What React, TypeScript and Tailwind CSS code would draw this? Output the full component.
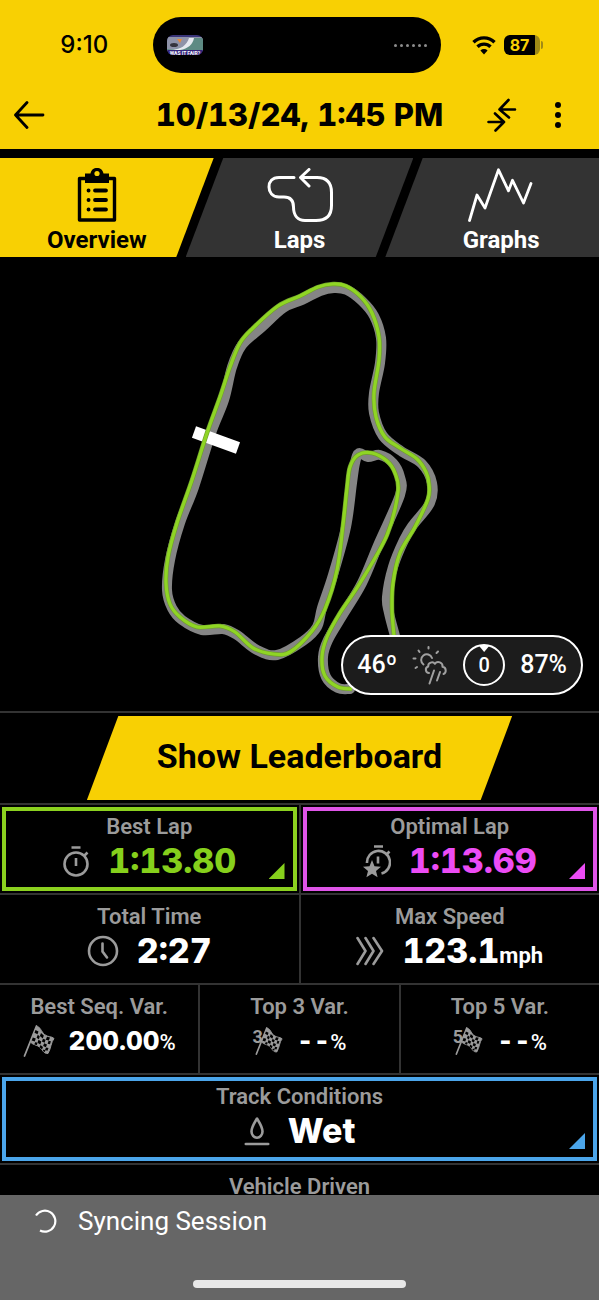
import type { ReactNode } from 'react';
import clsx from 'clsx';

type Point = [number, number];

// Track surface and driven line, in map units
const SURFACE: Point[] = [
  [395, 636], [389, 613], [387, 597], [393, 567], [404, 540], [413, 525], [430, 503], [432, 483],
  [422, 464], [401, 451], [383, 436], [374, 413], [374, 393], [380, 363], [381, 338], [374, 316],
  [362, 301], [347, 290], [334, 288], [320, 291], [302, 300], [283, 308], [262, 327], [242, 345],
  [232, 367], [224, 400], [211, 433], [194, 487], [180, 523], [170, 560], [167, 590], [172, 608],
  [182, 620], [202, 630], [223, 629], [237, 635], [257, 650], [277, 655], [303, 641], [317, 627],
  [322, 608], [333, 575], [346, 527], [352, 483], [355, 463], [359, 453], [368, 457], [380, 455],
  [393, 463], [400, 477], [400, 495], [379, 543], [362, 583], [344, 613], [328, 640], [323, 657],
  [326, 677], [338, 688], [350, 689],
];

const LINE: Point[] = [
  [394, 636], [392, 610], [393, 583], [400, 553], [415, 527], [428, 499], [429, 484], [426, 472],
  [417, 459], [400, 448], [385, 437], [376, 417], [374, 393], [379, 360], [379, 337], [372, 313],
  [361, 297], [346, 286], [333, 284], [318, 287], [300, 296], [278, 306], [253, 328], [240, 343],
  [230, 367], [220, 397], [207, 433], [192, 480], [177, 523], [168, 557], [166, 583], [170, 604],
  [180, 617], [197, 627], [220, 626], [235, 632], [253, 648], [273, 654], [290, 652], [312, 631],
  [325, 609], [337, 570], [343, 525], [347, 488], [350, 467], [358, 455], [372, 453], [387, 461],
  [395, 473], [398, 492], [387, 535], [360, 583], [340, 613], [327, 637], [322, 657], [325, 676],
  [338, 687], [352, 689],
];

function smoothPath(points: Point[]) {
  let d = `M${points[0][0]} ${points[0][1]}`;
  for (let i = 0; i < points.length - 1; i++) {
    const p0 = points[Math.max(i - 1, 0)];
    const p1 = points[i];
    const p2 = points[i + 1];
    const p3 = points[Math.min(i + 2, points.length - 1)];
    d += `C${p1[0] + (p2[0] - p0[0]) / 6} ${p1[1] + (p2[1] - p0[1]) / 6} ${p2[0] - (p3[0] - p1[0]) / 6} ${p2[1] - (p3[1] - p1[1]) / 6} ${p2[0]} ${p2[1]}`;
  }
  return d;
}

function TrackMap() {
  return (
    <svg viewBox="0 257 599 454" className="block w-full" fill="none" role="img" aria-label="Track map">
      <path d={smoothPath(SURFACE)} stroke="#858585" strokeWidth="10" strokeLinejoin="round" strokeLinecap="round" />
      <path d="M194 432 238 448" stroke="#fff" strokeWidth="12" />
      <path d={smoothPath(LINE)} stroke="#6f9f2c" strokeWidth="4.5" strokeLinejoin="round" />
      <path d={smoothPath(LINE)} stroke="#8fd524" strokeWidth="3.2" strokeLinejoin="round" />
    </svg>
  );
}

function StopwatchIcon() {
  return (
    <svg viewBox="0 0 28 32" className="h-8 w-7" fill="none" stroke="currentColor" strokeWidth="2.6">
      <circle cx="14" cy="19" r="11.5" />
      <path d="M9.5 2.5h9M14 13v8M22.5 10.5l3-3" />
    </svg>
  );
}

function OptimalIcon() {
  return (
    <svg viewBox="0 0 28 34" className="h-[34px] w-7" fill="none" stroke="currentColor" strokeWidth="2.6">
      <path d="M4 19a11.5 11.5 0 1 1 14.5 10.5" />
      <path d="M11 2.5h9M15 12.5v7M23.5 10.5l3-3" />
      <path
        d="m9 16 2.5 6.2 6.5.5-5 4.200 1.600 6.400L9 29.800l-5.600 3.500L5 26.900 0 22.700l6.500-.5Z"
        fill="currentColor"
        stroke="none"
      />
    </svg>
  );
}

function ClockIcon() {
  return (
    <svg viewBox="0 0 32 32" className="size-8" fill="none" stroke="currentColor" strokeWidth="2.6" strokeLinecap="round">
      <circle cx="16" cy="16" r="14" />
      <path d="M15.5 8.500v8l4.500 6" />
    </svg>
  );
}

function SpeedIcon() {
  return (
    <svg viewBox="0 0 28 30" className="h-[30px] w-7" fill="none" stroke="currentColor" strokeWidth="2.6" strokeLinecap="round" strokeLinejoin="round">
      <path d="m1.500 2 8 13-8 13M9.500 2l8 13-8 13M17.500 2l8.500 13-8.500 13" />
    </svg>
  );
}

function FlagIcon({ count }: { count?: number }) {
  return (
    <span className="flex items-start">
      {count && <span className="-mr-2 text-lg leading-5 font-bold">{count}</span>}
      <svg viewBox="0 0 32 32" className={count ? 'size-7' : 'size-8'} fill="none" stroke="currentColor">
        <path d="M13.500 1 1.500 31" strokeWidth="1.800" strokeLinecap="round" />
        <path
          d="M13.500 1.500c4 0 4.500 5 8 8s7 1.500 9.500 4c-3 3.500-3 10-6 15-4.500.5-5.500-4-8.500-6.500s-6.500-2-8.500-4.500Z"
          fill="currentColor"
        />
        {/* dark checks */}
        <g fill="#000" stroke="none">
          <path d="m12.500 5 3 1.500-1 2.800-3-1.500ZM18 8l2.800 2.600-1 2.900-2.900-2.400ZM24 11.800l3 .6-1.200 3-3-.7ZM14.800 9.800l2 1.600-1 2.800-2.200-1.500ZM20 13.800l2.600 1-1 3-2.700-1.400ZM25.600 15.800l2.300.4-.9 3-2.400-.4ZM9.800 12.600l3 .9-1.100 3-3-.9ZM15.500 14.800l2.900 1.800-1.100 2.900-2.800-1.800ZM21.200 18.200l2.800 1.200-1.100 2.900-2.800-1.200ZM12.500 17l2 1-.8 2.200-2.400-1ZM17.500 20l2.500 1.900-1 2.600-2.400-2.200ZM23 22.500l2.500.5-1 2.800-2.500-.8ZM20.500 24.500l2 .8-.7 1.800-1.900-1Z" />
        </g>
      </svg>
    </span>
  );
}

function WetIcon() {
  return (
    <svg viewBox="0 0 26 30" className="h-[30px] w-[26px]" fill="none" stroke="currentColor" strokeWidth="2.600" strokeLinecap="round" strokeLinejoin="round">
      <path d="M13 2.500c-3 5-5.500 8.500-5.500 13a5.500 6.200 0 0 0 11 0c0-4.500-2.500-8-5.500-13Z" />
      <path d="M1.800 28h22.400" />
    </svg>
  );
}

function WeatherIcon() {
  return (
    <svg viewBox="0 0 36 40" className="h-10 w-9 text-[#a0a0a0]" fill="none" stroke="currentColor" strokeWidth="2" strokeLinecap="round" strokeLinejoin="round">
      <path d="M11.500 19.500a5.600 5.600 0 1 1 8.500-6.500M16.500 2v1.500M6.500 5.500l1 1.500M26 6.500l-1.500 1.500M1.500 13.500h2M3.500 23l1.500-1" />
      <path d="M17 28c-3.500 0-4.500-5.500-.8-6.500-.4-4 4.800-5.500 6.600-2.700 2.700-3.600 8.400-1.300 7.700 3 4 .5 4.200 6.200 1 7.200" />
      <path d="m22 25.500-4.500 13M28 27l-3 8.500" />
    </svg>
  );
}

function StatusBar() {
  return (
    <div className="grid grid-cols-[1fr_288px_1fr] items-center pt-[17px] pr-1.5">
      <span className="pl-4 text-center font-['Inter',sans-serif] text-2xl font-medium">9:10</span>
      <div className="flex h-14 items-center justify-between rounded-full bg-black px-3.5">
        <div className="flex h-5 w-9 items-end justify-center overflow-hidden rounded-md bg-[#3a3579]">
          <svg viewBox="0 0 36 20" className="size-full">
            <path d="M0 2h36v14H0z" fill="#8f93a8" />
            <path d="M0 14C14 16 20 9 26 3h10v12H0z" fill="#5d8a83" />
            <path d="M2 15C14 15 20 10 22 3h5c-1 6-6 11-14 12z" fill="#e6e9ef" />
            <path d="M10 4h5l-2 4z" fill="#e78a3c" />
            <ellipse cx="7" cy="10" rx="4" ry="2" fill="#34343c" />
            <path d="M0 15h36v5H0z" fill="#34257a" />
            <text x="18" y="19.500" textAnchor="middle" fontSize="5" fontWeight="700" fill="#fff" fontFamily="Roboto, sans-serif">
              WAS IT FAIR?
            </text>
          </svg>
        </div>
        <div className="flex gap-[3px]">
          {[0, 1, 2, 3, 4, 5].map((dot) => (
            <span key={dot} className="size-[3px] rounded-full bg-[#8c8c8c]" />
          ))}
        </div>
      </div>
      <div className="flex items-center gap-2 pl-[31px]">
        <svg viewBox="0 0 24 20" className="h-5 w-6" fill="none" stroke="currentColor" strokeWidth="3.400">
          <path d="M1.500 7.200a15 15 0 0 1 21 0M5.500 11.800a9.300 9.300 0 0 1 13 0" />
          <path d="m12 19.500-3.600-4a5.200 5.200 0 0 1 7.200 0Z" fill="currentColor" stroke="none" />
        </svg>
        <div className="flex items-center gap-px">
          <span className="flex h-5 w-9 items-center justify-center rounded-md bg-gradient-to-r from-black from-87% to-[#a08a16] to-87% pr-1 font-['Inter',sans-serif] text-base font-bold text-[#f8d003]">
            87
          </span>
          <span className="h-2 w-0.5 rounded-r bg-[#a08a16]" />
        </div>
      </div>
    </div>
  );
}

function Header() {
  return (
    <header className="shrink-0 bg-[#f8d003] text-black">
      <StatusBar />
      <div className="grid h-[76px] grid-cols-[1fr_auto_1fr] items-center pt-2">
        <button type="button" aria-label="Back" className="ml-3.5 w-8">
          <svg viewBox="0 0 32 28" className="h-7 w-8" fill="none" stroke="currentColor" strokeWidth="2.800" strokeLinecap="round" strokeLinejoin="round">
            <path d="M29 14H1.500M13 1.500 1.500 14 13 26.500" />
          </svg>
        </button>
        <h1 className="font-['Inter',sans-serif] text-[31px] leading-10 font-extrabold tabular-nums">10/13/24, 1:45 PM</h1>
        <div className="flex items-center justify-end gap-8 pr-8">
          <button type="button" aria-label="Compare sessions">
            <svg viewBox="0 0 30 34" className="h-[34px] w-[30px]" fill="none" stroke="currentColor" strokeWidth="2.600" strokeLinecap="round" strokeLinejoin="round">
              <path d="M28 11.500H12.500M21.500 2l-9 9.500 9.500 8M1.500 24H17M8 15.500l9 8.500-8.500 8.500" />
            </svg>
          </button>
          <button type="button" aria-label="More options" className="px-1.5">
            <svg viewBox="0 0 6 26" className="h-[26px] w-1.5" fill="currentColor">
              <circle cx="3" cy="3" r="3" />
              <circle cx="3" cy="13" r="3" />
              <circle cx="3" cy="23" r="3" />
            </svg>
          </button>
        </div>
      </div>
    </header>
  );
}

function Tabs() {
  return (
    <nav className="mt-[9px] flex h-[99px] shrink-0 text-2xl leading-6 font-bold text-white">
      <button
        type="button"
        aria-current="page"
        className="min-w-0 grow-[214] basis-0 bg-[#f8d003] text-black [clip-path:polygon(0_0,100%_0,82.5%_100%,0_100%)]"
      >
        <span className="flex h-full flex-col items-center gap-1 pt-2.5 pr-5">
          <svg viewBox="0 0 40 56" className="h-14 w-10" fill="none" stroke="currentColor" strokeWidth="3.400" strokeLinecap="round">
            <path d="M2.500 10.500h35v41.500h-35z" strokeLinejoin="round" />
            <path d="M8 5.500h5.500C14.500 1.500 16.500 0 20 0s5.500 1.500 6.500 5.500H32V15H8Z" fill="currentColor" stroke="none" />
            <circle cx="20" cy="5.500" r="2.600" fill="#f8d003" stroke="none" />
            <path d="M11.500 22.500h.1M11.500 32h.1M11.500 41.500h.1M18 22.500h11M18 32h11M18 41.500h11" strokeWidth="3.800" />
          </svg>
          Overview
        </span>
      </button>
      <button
        type="button"
        className="-ml-7 min-w-0 grow-[228] basis-0 bg-[#333] [clip-path:polygon(16.5%_0,100%_0,83.5%_100%,0_100%)]"
      >
        <span className="flex h-full flex-col items-center gap-1 pt-2.5">
          <svg viewBox="0 0 66 56" className="h-14 w-[66px]" fill="none" stroke="currentColor" strokeWidth="3" strokeLinecap="round" strokeLinejoin="round">
            <path d="M27 9.500H12C5 9.500 2 14 2 19S5 29 12 29h5c7 0 9.500 4 9.500 10C26.500 47.500 31 52.500 38 52.500h11c10 0 15.500-5 15.500-15v-13C64.500 14.500 60 9.500 50 9.500H34M42 1.500 33.500 9.500 42 18" />
          </svg>
          Laps
        </span>
      </button>
      <button
        type="button"
        className="-ml-7 min-w-0 grow-[214] basis-0 bg-[#333] [clip-path:polygon(17.5%_0,100%_0,100%_100%,0_100%)]"
      >
        <span className="flex h-full flex-col items-center gap-1 pt-2.5 pl-[18px]">
          <svg viewBox="0 0 70 56" className="h-14 w-[70px]" fill="none" stroke="currentColor" strokeWidth="2.800" strokeLinecap="round" strokeLinejoin="round">
            <path d="M3.500 52.500 11 27l8 13L32.500 1.800l10 21 4-10.500L57.500 35 65 15.500" />
          </svg>
          Graphs
        </span>
      </button>
    </nav>
  );
}

type Accent = 'green' | 'pink' | 'blue';

interface CellProps {
  label: string;
  icon: ReactNode;
  value: string;
  unit?: string;
  small?: boolean;
  // set on cells that open a detail page
  accent?: Accent;
}

const frameColor: Record<Accent, string> = {
  green: 'border-[#8bd11f]',
  pink: 'border-[#df55e8]',
  blue: 'border-[#4ba5ea]',
};

const cornerColor: Record<Accent, string> = {
  green: 'bg-[#86d01c]',
  pink: 'bg-[#ec4cf5]',
  blue: 'bg-[#4ba5ea]',
};

const valueColor: Record<Accent, string> = {
  green: 'text-[#86d01c]',
  pink: 'text-[#ec4cf5]',
  blue: 'text-white',
};

function Cell({ label, icon, value, unit, small, accent }: CellProps) {
  const body = (
    <>
      <span className="text-[22px] leading-6 font-semibold text-[#9b9b9b]">{label}</span>
      <span className={clsx('flex h-11 items-center justify-center text-[#9b9b9b]', small ? 'gap-3.5' : 'gap-[18px]')}>
        {icon}
        <span className={clsx('flex items-baseline', accent ? valueColor[accent] : 'text-white')}>
          <span
            className={clsx(
              "font-['Inter',sans-serif] leading-10 font-extrabold tabular-nums",
              small ? 'text-[26px]' : 'text-[34px]'
            )}
          >
            {value}
          </span>
          {unit && (
            <span className={clsx('text-[22px] leading-6', unit === '%' ? 'font-medium' : 'font-bold')}>{unit}</span>
          )}
        </span>
      </span>
    </>
  );

  if (!accent) {
    return <div className="flex h-[88px] min-w-0 flex-1 flex-col items-center pt-2.5">{body}</div>;
  }

  return (
    <div className="h-[88px] min-w-0 flex-1 p-0.5">
      <button
        type="button"
        className={clsx('relative flex h-full w-full flex-col items-center border-4 pt-1', frameColor[accent])}
      >
        {body}
        <span
          className={clsx(
            'absolute right-2 bottom-2 size-4 [clip-path:polygon(100%_0,100%_100%,0_100%)]',
            cornerColor[accent]
          )}
        />
      </button>
    </div>
  );
}

function Row({ children }: { children: ReactNode }) {
  return <div className="flex divide-x-2 divide-[#333] border-t-2 border-[#333]">{children}</div>;
}

export default function App() {
  return (
    <div className="flex h-screen flex-col overflow-hidden bg-black font-['Roboto',sans-serif] text-white">
      <Header />
      <Tabs />

      <main className="min-h-0 flex-1 overflow-y-auto [scrollbar-width:none]">
        <div className="relative">
          <TrackMap />
          <div className="absolute right-4 bottom-4 flex h-[60px] items-center gap-[15px] rounded-full border-2 border-white bg-[#1c1c1c] px-3.5 text-[25px] font-medium">
            <span>46º</span>
            <WeatherIcon />
            <span className="relative flex size-[42px] items-center justify-center rounded-full border-2 border-white text-xl">
              <span className="absolute top-0 h-1.5 w-2.5 bg-white [clip-path:polygon(0_0,100%_0,50%_100%)]" />
              0
            </span>
            <span>87%</span>
          </div>
        </div>

        <div className="flex justify-center border-t-2 border-[#333] py-[3px]">
          <button
            type="button"
            className="h-[84px] w-[71%] bg-[#f8d003] pb-1 text-[34px] font-bold text-black [clip-path:polygon(7.4%_0,100%_0,92.6%_100%,0_100%)]"
          >
            Show Leaderboard
          </button>
        </div>

        <Row>
          <Cell label="Best Lap" icon={<StopwatchIcon />} value="1:13.80" accent="green" />
          <Cell label="Optimal Lap" icon={<OptimalIcon />} value="1:13.69" accent="pink" />
        </Row>
        <Row>
          <Cell label="Total Time" icon={<ClockIcon />} value="2:27" />
          <Cell label="Max Speed" icon={<SpeedIcon />} value="123.1" unit="mph" />
        </Row>
        <Row>
          <Cell label="Best Seq. Var." icon={<FlagIcon />} value="200.00" unit="%" small />
          <Cell label="Top 3 Var." icon={<FlagIcon count={3} />} value="--" unit="%" small />
          <Cell label="Top 5 Var." icon={<FlagIcon count={5} />} value="--" unit="%" small />
        </Row>
        <Row>
          <Cell label="Track Conditions" icon={<WetIcon />} value="Wet" accent="blue" />
        </Row>
        <Row>
          <div className="flex h-[88px] flex-1 justify-center pt-2.5 text-[22px] leading-6 font-semibold text-[#9b9b9b]">
            Vehicle Driven
          </div>
        </Row>
      </main>

      <footer className="flex h-[105px] shrink-0 flex-col justify-between bg-[#666] pt-2 pb-3">
        <div role="status" className="flex items-center gap-5 pl-[34px] text-[26px] leading-9">
          <svg viewBox="0 0 24 24" className="size-6" fill="none" stroke="currentColor" strokeWidth="2.200">
            <path d="M2 6.500A10.500 10.500 0 1 1 6 21.500" />
          </svg>
          Syncing Session
        </div>
        <div className="mx-auto h-2 w-[213px] rounded-full bg-[#e8e8e8]" />
      </footer>
    </div>
  );
}
